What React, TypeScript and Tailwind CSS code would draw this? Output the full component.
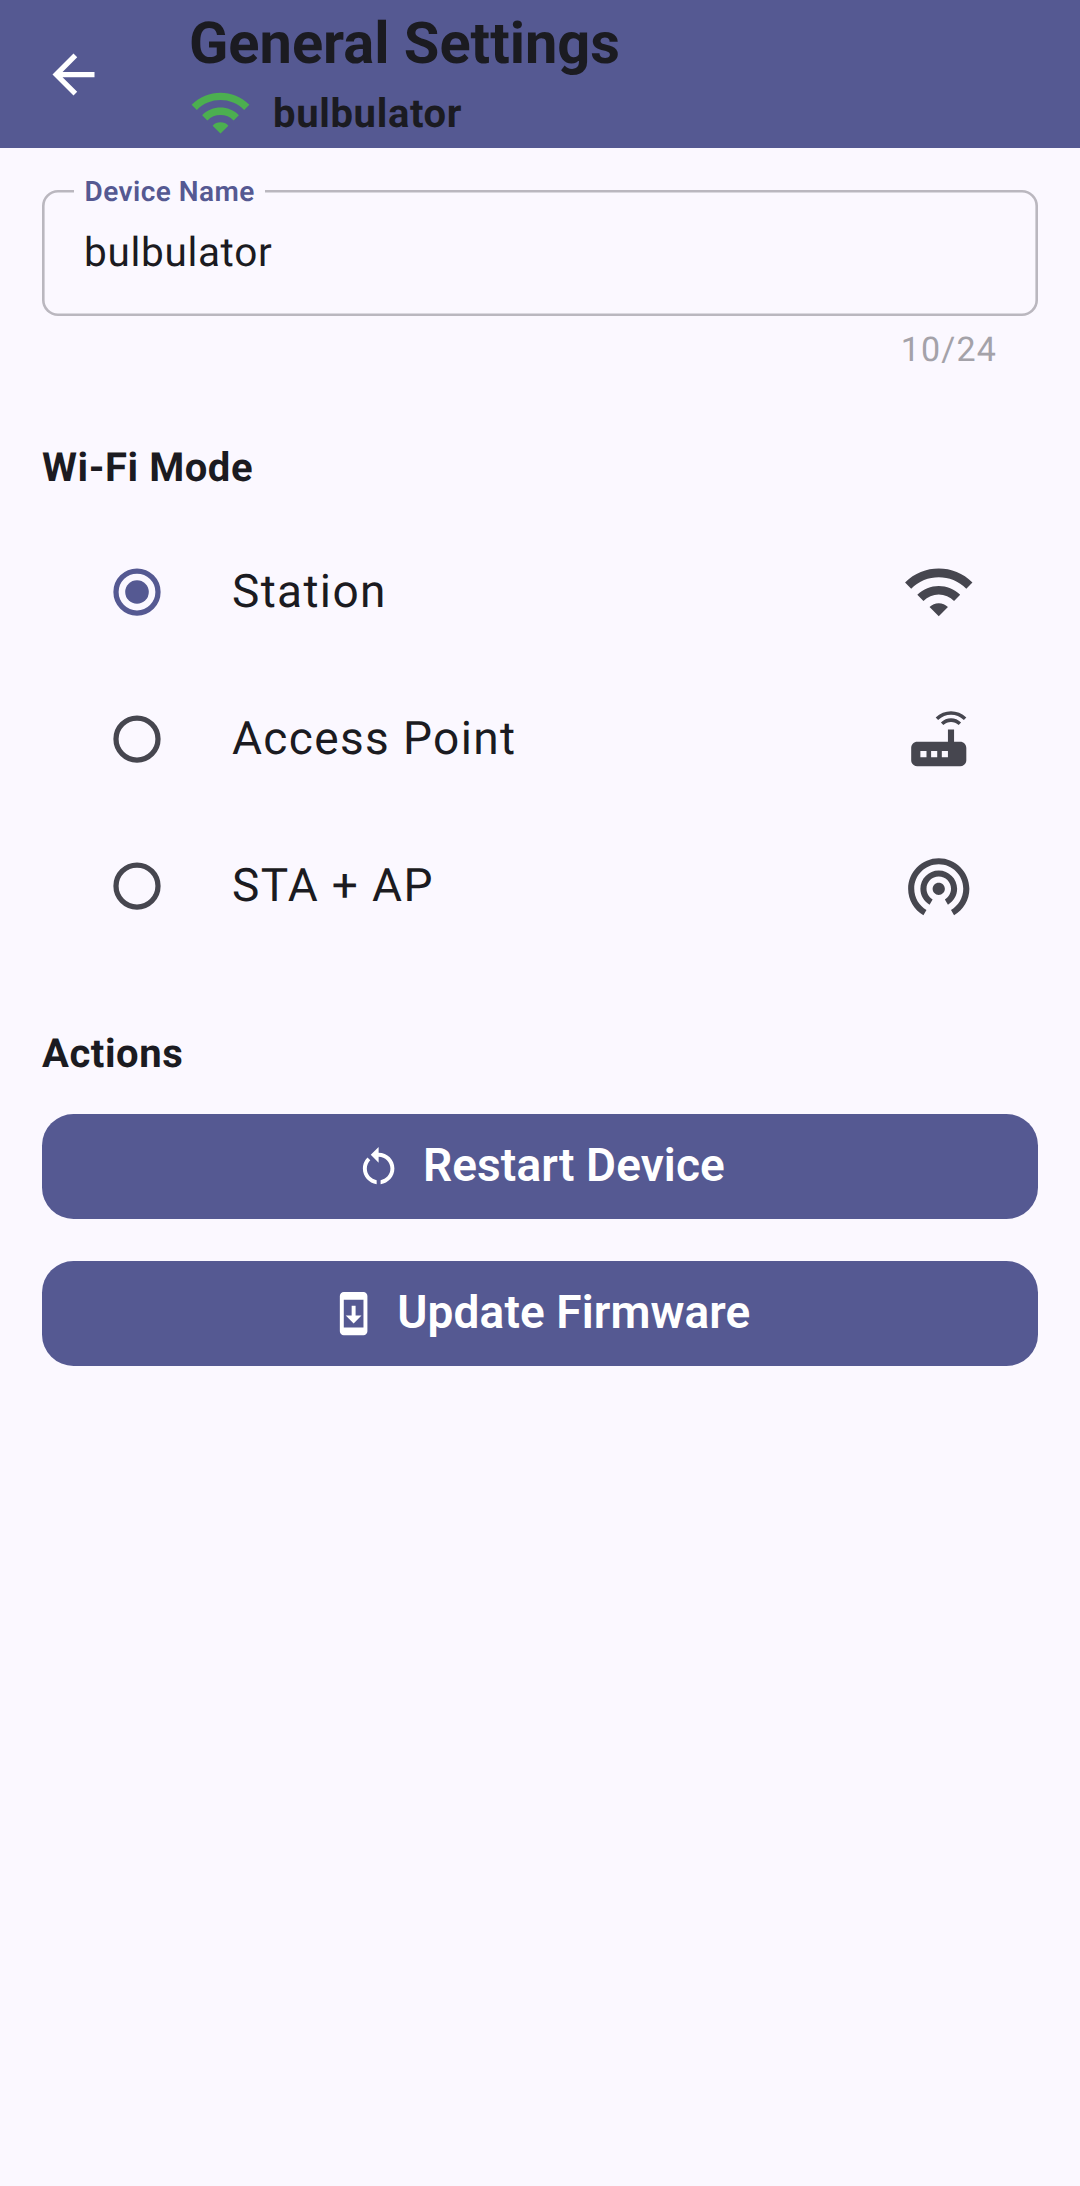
import type { ReactNode } from "react";
import type { IconType } from "react-icons";
import {
  MdArrowBack,
  MdRestartAlt,
  MdRouter,
  MdSystemUpdate,
  MdWifi,
  MdWifiTethering,
} from "react-icons/md";

function Radio({ checked }: { checked: boolean }) {
  return (
    <svg
      viewBox="0 0 48 48"
      className={`size-12 shrink-0 ${checked ? "text-[#555992]" : "text-[#46464f]"}`}
    >
      <circle cx="24" cy="24" r="21" fill="none" stroke="currentColor" strokeWidth="5.25" />
      {checked && <circle cx="24" cy="24" r="11.8" fill="currentColor" />}
    </svg>
  );
}

function ModeRow({ label, Icon, checked = false }: { label: string; Icon: IconType; checked?: boolean }) {
  return (
    <div className="flex h-[147px] items-center pr-[63px] pl-[70.5px]">
      <Radio checked={checked} />
      <span className="ml-[71.5px] flex-1 text-[46px] leading-[64px] tracking-[1.36px]">{label}</span>
      <Icon className="size-[73.5px] text-[#46464f]" />
    </div>
  );
}

function SectionTitle({ children, className }: { children: ReactNode; className: string }) {
  return (
    <h2 className={`text-[40px] leading-[56px] font-bold tracking-[0.55px] ${className}`}>{children}</h2>
  );
}

function ActionButton({ label, Icon }: { label: string; Icon: IconType }) {
  return (
    <button className="flex h-[105px] w-full items-center justify-center gap-[20.5px] rounded-[31.5px] bg-[#555992] text-white">
      <Icon className="size-[47.25px]" />
      <span className="pb-[3px] text-[46px] leading-[60px] font-semibold tracking-[0.1px]">{label}</span>
    </button>
  );
}

export default function App() {
  return (
    <div className="min-h-[2186px] w-full bg-[#fbf8ff] font-['Roboto',sans-serif] text-[#1b1b21] [text-rendering:geometricPrecision]">
      <header className="flex h-[148px] items-start bg-[#555992] pl-[42px]">
        <MdArrowBack className="mt-[43px] size-[63px] text-white" />
        <div className="ml-[84px] pt-[8px]">
          <h1 className="mb-[1px] text-[57.75px] leading-[72px] font-bold">General Settings</h1>
          <div className="flex h-[63px] items-center gap-[21px]">
            <MdWifi className="size-[63px] text-[#4caf50]" />
            <span className="pt-[2px] text-[40px] leading-[56px] font-bold tracking-[0.65px]">bulbulator</span>
          </div>
        </div>
      </header>

      <main className="px-[42px] pt-[42px]">
        <div className="relative h-[126px] rounded-[16px] pt-[32px] pl-[42px] shadow-[inset_0_0_0_2.6px_#bab7bf]">
          <label className="absolute -top-[16px] left-[32px] bg-[#fbf8ff] px-[10.5px] text-[28px] leading-[36px] font-semibold tracking-[0.46px] text-[#555992]">
            Device Name
          </label>
          <div className="text-[40.5px] leading-[60px] tracking-[0.68px]">bulbulator</div>
        </div>
        <div className="h-[124px] pt-[10px] pr-[41px] text-right text-[34px] leading-[48px] tracking-[1.18px] text-[#a4a2a9]">
          10/24
        </div>

        <SectionTitle className="mb-[22px]">Wi-Fi Mode</SectionTitle>
        <ModeRow label="Station" Icon={MdWifi} checked />
        <ModeRow label="Access Point" Icon={MdRouter} />
        <ModeRow label="STA + AP" Icon={MdWifiTethering} />

        <SectionTitle className="mt-[67px] mb-[32px]">Actions</SectionTitle>
        <div className="flex flex-col gap-[42px]">
          <ActionButton label="Restart Device" Icon={MdRestartAlt} />
          <ActionButton label="Update Firmware" Icon={MdSystemUpdate} />
        </div>
      </main>
    </div>
  );
}
